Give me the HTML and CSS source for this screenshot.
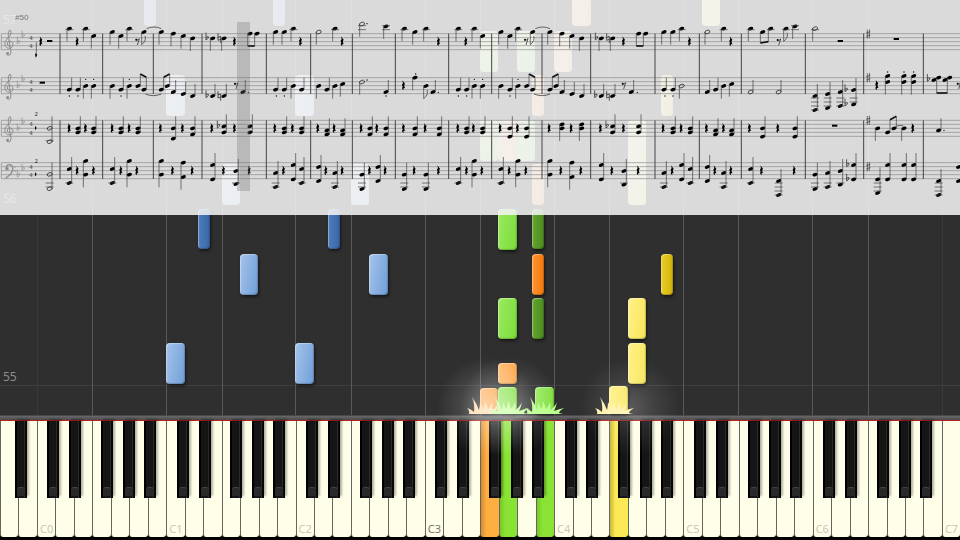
FILE: index.html
```html
<!DOCTYPE html>
<html lang="en">

<head>
    <meta charset="UTF-8">
    <meta name="viewport" content="width=device-width, initial-scale=1.0">
    <title>Piano Roll</title>
    <link rel="stylesheet" href="styles.css">
</head>

<body>

    <main class="player">
        <section class="roll" id="roll">
            <div class="bar-line">
                <span class="bar-number">55</span>
            </div>
            <div class="score">
                <span class="ghost-number ghost-top">57</span>
                <span class="ghost-number ghost-bottom">56</span>
                <span class="measure-number">#50</span>
                <svg class="sheet" id="sheet" viewBox="0 0 2880 645">
                    <defs>
                        <g id="rest">
                            <path d="M-4 -16 L4 -6 Q-1 0 5 8 Q-3 5 0 14 Q-8 8 -3 4 L-5 -3 Q0 -8 -4 -16 Z" />
                        </g>
                        <g id="eighth-rest">
                            <circle cx="-3" cy="-5" r="3" />
                            <path d="M-5 -4 Q2 -2 6 -8 L0 11" fill="none" stroke="#111" stroke-width="2" />
                        </g>
                        <g id="flat">
                            <path d="M-4 -17 V5 Q6 -1 3 -5 Q0 -7 -4 -2" fill="none" stroke="currentColor" stroke-width="2" />
                        </g>
                        <g id="natural">
                            <path d="M-4 -15 V6 L4 3 M4 14 V-6 L-4 -3" fill="none" stroke="#111" stroke-width="2" />
                        </g>
                        <g id="sharp">
                            <path d="M-3 -13 V14 M3 -14 V13 M-6 -3 L6 -7 M-6 7 L6 3" fill="none" stroke="#333" stroke-width="2" />
                        </g>
                        <g id="treble">
                            <path d="M2 13 Q-8 11 -6 3 Q-3 -5 5 -2 Q14 3 10 13 Q5 22 -6 18 Q-19 9 -10 -5 Q-4 -13 3 -20 Q8 -31 2 -36 Q-5 -32 -3 -19 L5 30 Q5 40 -3 40 Q-9 39 -8 33" fill="none" stroke="#8c8c8c" stroke-width="3" />
                            <circle cx="-5" cy="34" r="4" fill="#8c8c8c" />
                        </g>
                        <g id="bass">
                            <path d="M-10 -7 Q-9 -20 2 -19 Q14 -15 9 0 Q3 14 -12 21" fill="none" stroke="#8c8c8c" stroke-width="4" />
                            <circle cx="-7" cy="-7" r="5" fill="#8c8c8c" />
                            <circle cx="17" cy="-12" r="2" fill="#8c8c8c" />
                            <circle cx="17" cy="0" r="2" fill="#8c8c8c" />
                        </g>
                    </defs>
                </svg>
                <div class="playhead"></div>
            </div>
        </section>
        <div class="rail"></div>
        <section class="keyboard" id="keyboard"></section>
    </main>

    <script src="script.js"></script>

</body>

</html>
```

FILE: styles.css
```css
body {
    margin: 0;
    background-color: #000;
    font-family: "Noto Sans", "Open Sans", sans-serif;
}

.player {
    display: flex;
    flex-direction: column;
    height: 100vh;
    overflow: hidden;
}

.roll {
    position: relative;
    flex: 1;
    background-color: #2f2f30;
}

.octave-line {
    position: absolute;
    top: 0;
    bottom: 0;
    width: 1px;
    background-color: #5a5a5a;
}

.octave-line.dim {
    background-color: #3a3a3a;
}

.bar-line {
    position: absolute;
    left: 0;
    right: 0;
    bottom: 29px;
    border-bottom: 1px solid #3f3f3f;
}

.bar-number {
    display: block;
    padding-left: 3px;
    font-size: 12px;
    line-height: 16px;
    color: #8c8c8c;
}

/* falling notes */
.note {
    position: absolute;
    box-sizing: border-box;
    border-radius: 4px;
    box-shadow: inset 1px 1px 1px rgba(255, 255, 255, 0.35), inset -1px -1px 1px rgba(0, 0, 0, 0.2), 1px 2px 3px rgba(0, 0, 0, 0.5);
}

.note.faded {
    box-shadow: inset 0 0 0 40px rgba(255, 255, 255, 0.45);
}

.note.blue {
    background: linear-gradient(100deg, #a5c3ea, #709fd8);
}

.note.navy {
    background: linear-gradient(90deg, #4f7dbb, #3866a8);
}

.note.green {
    background: linear-gradient(100deg, #9bea62, #7bdc38);
}

.note.forest {
    background: linear-gradient(90deg, #62a52e, #4d8c1f);
}

.note.orange {
    background: linear-gradient(100deg, #ffbd76, #fba243);
}

.note.rust {
    background: linear-gradient(90deg, #ff9431, #f3790c);
}

.note.yellow {
    background: linear-gradient(100deg, #fff28a, #f8e558);
}

.note.gold {
    background: linear-gradient(90deg, #e9cd27, #d1b309);
}

.glow {
    position: absolute;
    z-index: 3;
    bottom: -42px;
    width: 100px;
    height: 100px;
    margin-left: -50px;
    background: radial-gradient(closest-side, rgba(255, 255, 255, 0.3), rgba(255, 255, 255, 0.12) 50%, rgba(255, 255, 255, 0));
    pointer-events: none;
}

.glow.soft {
    opacity: 0.7;
}

.splash {
    position: absolute;
    z-index: 2;
    bottom: 1px;
    width: 40px;
    height: 18px;
    margin-left: -20px;
}

/* sheet music */
.score {
    position: absolute;
    z-index: 1;
    top: 0;
    left: 0;
    right: 0;
    background-color: rgba(243, 243, 243, 0.88);
}

.sheet {
    display: block;
    width: 100%;
    height: auto;
    color: #111;
}

.measure-number,
.ghost-number {
    position: absolute;
    line-height: 12px;
}

.measure-number {
    top: 12px;
    left: 15px;
    font-family: "Liberation Sans", sans-serif;
    font-size: 8px;
    color: #777;
}

.ghost-number {
    left: 3px;
    font-size: 12px;
    color: #e8e8e8;
}

.ghost-top {
    top: 14px;
}

.ghost-bottom {
    bottom: 10px;
}

.playhead {
    position: absolute;
    top: 10%;
    bottom: 11%;
    left: 24.7%;
    width: 1.3%;
    background-color: rgba(110, 110, 110, 0.3);
}

.staff-line {
    stroke: #8a8a8a;
    stroke-width: 2;
}

.stem {
    stroke: #3a3a3a;
    stroke-width: 2;
}

.measure-bar {
    stroke: #444;
    stroke-width: 3;
}

.beam {
    stroke: #111;
    stroke-width: 5;
}

.tie {
    fill: none;
    stroke: #222;
    stroke-width: 2;
}

.open-head {
    fill: none;
    stroke: #111;
    stroke-width: 2;
}

.signature {
    color: #8c8c8c;
}

.time {
    font-family: "Liberation Serif", serif;
    font-weight: bold;
    font-size: 20px;
    fill: #666;
    text-anchor: middle;
}

.voice {
    font-family: "Liberation Serif", serif;
    font-size: 18px;
}

/* piano */
.rail {
    height: 5px;
    background: linear-gradient(#3c3c3d, #656566 30%, #4b4b4d);
    border-bottom: 1px solid #b8201e;
}

.keyboard {
    display: flex;
    height: 119px;
    box-sizing: border-box;
    padding-bottom: 3px;
    background-color: #000;
}

.slot {
    position: relative;
    flex: 1;
}

.white-key,
.black-key {
    padding: 0;
    border: none;
    cursor: pointer;
}

.white-key {
    display: flex;
    align-items: flex-end;
    width: 100%;
    height: 100%;
    padding: 0 0 0 2px;
    border-left: 1px solid #66665c;
    border-radius: 0 0 3px 3px;
    background-color: #fffee8;
    font-family: inherit;
    font-size: 11px;
    line-height: 16px;
    color: #cbc8b3;
}

.white-key.middle {
    color: #77756a;
}

.white-key.orange {
    background: linear-gradient(90deg, #d88a30, #ffae42 30%);
}

.white-key.green {
    background: linear-gradient(90deg, #75c927, #8ae234 30%);
}

.white-key.yellow {
    background: linear-gradient(90deg, #c6b53a, #fbe955 30%);
}

.black-key {
    position: absolute;
    z-index: 1;
    top: 0;
    width: 65%;
    height: 66%;
    background: linear-gradient(90deg, #000 15%, #151515 16%, #151515 78%, #3a3a3a 80%, #050505 88%);
    box-shadow: 2px -2px 2px rgba(0, 0, 0, 0.3);
}

.black-key::after {
    content: "";
    position: absolute;
    left: 2px;
    right: 2px;
    bottom: 2px;
    height: 8px;
    border-top: 1px solid #444;
    border-radius: 3px 3px 0 0;
    background-color: #292929;
}
```

FILE: script.js
```js
const WHITE_KEYS = 52;
// where each black key starts, measured in white keys from the left of its slot (C..B)
const BLACK_OFFSETS = [0.57, 0.75, null, 0.48, 0.66, 0.8, null];

const roll = document.getElementById('roll');
const keyboard = document.getElementById('keyboard');
const sheet = document.getElementById('sheet');

function degree(key) {
    return (key + 5) % 7;
}

// keyboard
const pressed = { 26: 'orange', 27: 'green', 29: 'green', 33: 'yellow' };

for (let key = 0; key < WHITE_KEYS; key++) {
    const slot = document.createElement('div');
    slot.className = 'slot';

    const white = document.createElement('button');
    white.type = 'button';
    white.className = 'white-key ' + (pressed[key] || '');
    if (degree(key) === 0) {
        const octave = (key - 2) / 7;
        white.textContent = 'C' + octave;
        if (octave === 3) white.classList.add('middle');
    } else {
        white.setAttribute('aria-label', 'CDEFGAB'[degree(key)]);
    }
    slot.appendChild(white);

    const offset = BLACK_OFFSETS[degree(key)];
    if (offset !== null && key < WHITE_KEYS - 1) {
        const black = document.createElement('button');
        black.type = 'button';
        black.className = 'black-key';
        black.setAttribute('aria-label', 'CDEFGAB'[degree(key)] + ' sharp');
        black.style.left = offset * 100 + '%';
        slot.appendChild(black);
    }
    keyboard.appendChild(slot);

    // guide lines on every C and F
    if (degree(key) === 0 || degree(key) === 3) {
        const line = document.createElement('div');
        line.className = 'octave-line' + (key === 2 || key === 51 ? ' dim' : '');
        line.style.left = key / WHITE_KEYS * 100 + '%';
        roll.appendChild(line);
    }
}

// falling notes: white key index, top, height, colour
const sharpColours = ['navy', 'forest', 'rust', 'gold'];
const notes = [
    [7, -14, 40, 'navy'], [14, -14, 40, 'navy'], [31, -14, 40, 'orange'], [38, -14, 40, 'yellow'],
    [26, 31, 41, 'green'], [28, 31, 41, 'green'], [30, 31, 41, 'orange'],
    [9, 75, 41, 'blue'], [16, 75, 41, 'blue'], [28, 75, 41, 'rust'], [35, 75, 41, 'gold'],
    [26, 120, 41, 'green'], [27, 120, 41, 'orange'], [28, 120, 41, 'green'], [34, 120, 85, 'yellow'],
    [12, 164, 41, 'blue'], [19, 164, 41, 'blue'], [28, 164, 41, 'rust'],
    [10, 209, 40, 'navy'], [17, 209, 40, 'navy'], [27, 209, 41, 'green'], [28, 209, 40, 'forest'],
    [13, 254, 41, 'blue'], [20, 254, 41, 'blue'], [28, 254, 41, 'rust'], [35, 254, 41, 'gold'],
    [27, 298, 41, 'green'], [28, 298, 41, 'forest'], [34, 298, 41, 'yellow'],
    [9, 343, 41, 'blue'], [16, 343, 41, 'blue'], [34, 343, 41, 'yellow'], [27, 363, 21, 'orange'],
    [26, 388, 26, 'orange'], [27, 387, 27, 'green'], [29, 387, 27, 'green'], [33, 386, 28, 'yellow']
];

notes.forEach(([key, top, height, colour]) => {
    const isSharp = sharpColours.includes(colour);
    const note = document.createElement('div');
    const start = isSharp ? key + BLACK_OFFSETS[degree(key)] : key;
    note.className = 'note ' + colour + (top < 200 ? ' faded' : '');
    note.style.left = start / WHITE_KEYS * 100 + '%';
    note.style.width = (isSharp ? 0.65 : 1) / WHITE_KEYS * 100 + '%';
    note.style.top = top + 'px';
    note.style.height = height + 'px';
    roll.appendChild(note);
});

// sparks where a note meets the keys
const splashes = [[26.4, '#ffdcae', ''], [27.6, '#c3ff9a', ''], [29.5, '#b9ff8c', 'none'], [33.3, '#fff2ac', 'soft']];

splashes.forEach(([key, colour, glow]) => {
    const left = key / WHITE_KEYS * 100 + '%';
    roll.insertAdjacentHTML('beforeend',
        `<svg class="splash" viewBox="0 0 40 18"><path fill="${colour}" d="M2 18 Q3 15 0 12 Q4 13 7 16 Q8 8 5 1 Q10 8 12 14 Q13 10 13 6 Q15 10 16 13 Q18 10 18 5 Q20 9 21 13 Q24 10 25 6 Q26 10 25 14 Q30 11 32 6 Q31 11 29 15 Q34 13 39 12 Q34 15 34 17 L38 18 Z"/></svg>`);
    roll.lastElementChild.style.left = left;
    if (glow !== 'none') {
        roll.insertAdjacentHTML('beforeend', `<div class="glow ${glow}"></div>`);
        roll.lastElementChild.style.left = (key + (glow ? 0.8 : 0)) / WHITE_KEYS * 100 + '%';
    }
});

// sheet music
// u/d quarter note stem up/down, U/D half note, f flagged eighth, h head only
// r/e rests, w block rest, b flat, n natural, s sharp, . dot
const staves = [
    {
        top: 101,
        music: `r123:125 w149:123 d208:86 r232:125 d257:86 d281:108 d337:96 d363:108 d388:86 e412:124 f432:96
            d484:96 d520:101 d550:108 d578:115 b622:115 d638:115 n658:115 d672:115 r704:125 h750:101 h771:101
            d827:96 d853:96 d880:86 r902:125 D956:96 d1005:86 r1027:125 D1086:72 .1101:71 d1158:79
            d1213:86 d1245:96 d1278:86 r1316:125 d1375:86 r1398:125 d1423:86 d1448:108 d1503:96 d1530:108
            d1554:86 e1578:124 f1598:96 d1650:96 d1686:101 d1716:108 d1745:115 b1790:115 d1804:115 n1824:115
            d1838:115 r1871:125 h1916:101 h1937:101 d1992:96 d2019:96 d2045:86 r2069:125 D2122:96 d2171:86
            r2193:125 d2252:86 h2288:96 h2312:86 e2336:125 f2358:86 d2385:79 D2445:86 w2521:123 s2605:102 w2689:117`
    },
    {
        top: 233,
        music: `w127:248 u208:269 u234:269 d257:258 d281:258 .208:288 .234:288 .257:238 .281:238 d337:258 u363:269
            .363:288 .388:238 d388:258 h414:258 h432:269 h484:269 h502:258 u520:276 u550:282 u578:288 b622:288
            u638:288 n658:288 u672:288 e708:256 u729:276 .745:277 u827:269 u853:269 .829:288 .853:288 d880:258
            u905:269 d956:258 u981:269 d1005:258 d1028:252 D1086:246 .1101:240 u1158:276 .1158:288 r1211:257
            d1245:233 .1247:222 f1278:258 u1299:276 .1315:277 u1375:269 u1400:269 .1375:288 .1400:288 d1423:258
            .1423:238 d1448:258 .1448:238 d1503:258 u1530:269 .1530:288 d1554:258 .1554:238 h1580:258 h1598:269
            h1650:269 h1668:258 u1686:276 u1716:282 u1745:288 b1788:288 u1804:288 n1824:288 u1838:288 e1871:256
            u1894:276 .1912:277 u1992:269 u2019:269 .1995:288 .2019:288 D2045:258 u2122:276 u2147:269 d2171:258
            d2195:252 U2252:276 U2336:276 u2445:288,330 u2483:282,324 u2521:276,318 u2561:270,313 b2539:270
            b2539:313 s2605:233 r2631:256 d2663:228,246 d2712:228,246 d2741:228,246 .2663:216 .2712:216 .2741:216
            b2786:239 h2802:240 h2816:233 h2835:240 h2849:233 e2876:256`
    },
    {
        top: 361,
        music: `U149:385,425 r208:385 u234:385,397 r257:385 u281:385,397 r337:385 u363:385,397 r388:385 u414:385,397
            r482:385 u520:385,416 r548:385 u578:385,403 r636:385 b656:379 u672:379,397 r704:385 u750:379,397
            r825:385 u853:385,397 r878:385 u905:385,397 r954:385 u981:391,403 r1003:385 u1028:391,403 r1084:385
            u1110:385,403 r1131:385 u1158:385,403 r1211:385 u1245:385,403 r1276:385 u1318:385,403 r1374:385
            u1400:385,397 r1421:385 u1448:385,397 r1501:385 u1530:385,410 r1553:385 u1580:385,410 r1648:385
            d1686:373,385 r1714:385 d1745:373,385 r1802:385 b1822:379 u1838:379,397 r1871:385 u1916:379,397
            r1990:385 u2019:385,397 r2044:385 u2071:385,397 r2120:385 u2147:391,403 r2171:385 u2195:391,403
            r2249:385 u2288:385,410 r2334:385 u2385:385,410 w2504:377 s2605:361 d2633:385 h2663:397 h2682:385
            d2712:385 r2739:385 u2816:391 .2832:391`
    },
    {
        top: 488,
        music: `U149:523,566 u208:507,549 r232:512 d257:483,524 r281:512 u337:507,549 r363:512 d388:483,524 r411:512
            d484:483,524 r518:512 d550:488,531 r577:512 u638:495,538 r671:512 u708:513,552 r748:512 u827:519,561
            r851:512 u880:495,538 u905:507,549 u956:501,543 r978:512 u1005:519,561 r1027:512 u1086:524,567
            r1109:512 u1134:501,543 r1156:512 u1213:524,567 r1243:512 u1278:524,567 r1316:512 u1375:507,549
            r1400:512 d1423:483,524 r1446:512 u1503:507,549 r1528:512 d1554:483,524 r1578:512 d1650:483,524
            r1683:512 d1716:488,531 r1743:512 u1804:495,538 r1836:512 u1872:513,554 r1915:512 u1992:519,561
            r2017:512 u2045:495,538 u2071:507,549 u2122:501,543 r2145:512 u2171:519,561 r2193:512 u2252:507,549
            r2285:512 u2336:543,585 r2383:512 u2445:524,567 u2483:519,561 u2521:513,554 u2561:495,538 b2544:495
            b2544:538 s2605:500 u2633:538,579 u2663:495,538 u2712:495,538 u2741:495,538 u2816:543,585 u2876:501,543`
    }
];

const measures = [180, 308, 460, 606, 799, 932, 1057, 1186, 1346, 1475, 1626, 1772, 1965, 2098, 2224, 2416, 2591, 2770];

const symbols = { r: 'rest', e: 'eighth-rest', b: 'flat', n: 'natural', s: 'sharp' };

function line(x1, y1, x2, y2, cls) {
    return `<line x1="${x1}" y1="${y1}" x2="${x2}" y2="${y2}" class="${cls}"/>`;
}

function drawNote(type, x, ys, staffTop) {
    let out = '';
    const low = Math.max(...ys);
    const high = Math.min(...ys);
    const open = type === 'U' || type === 'D';
    ys.forEach(y => {
        out += `<ellipse cx="${x}" cy="${y}" rx="8" ry="5" transform="rotate(-20 ${x} ${y})" class="${open ? 'open-head' : 'head'}"/>`;
    });
    if (type === 'u' || type === 'U') out += line(x + 7, low, x + 7, high - 36, 'stem');
    if (type === 'd' || type === 'D' || type === 'f') out += line(x - 7, high, x - 7, low + 38, 'stem');
    if (type === 'f') out += `<path class="tie" d="M${x - 7} ${low + 38} Q${x + 8} ${low + 26} ${x + 3} ${low + 12}"/>`;
    // ledger lines outside the staff
    for (let y = staffTop - 12; y >= high - 3; y -= 12) out += line(x - 12, y, x + 12, y, 'stem');
    for (let y = staffTop + 61; y <= low + 3; y += 12) out += line(x - 12, y, x + 12, y, 'stem');
    return out;
}

let drawing = '';

staves.forEach((staff, index) => {
    const top = staff.top;
    for (let i = 0; i < 5; i++) {
        const y = top + i * 12;
        drawing += line(4, y, 2880, y, 'staff-line');
    }
    const treble = index < 3;
    drawing += `<use href="#${treble ? 'treble' : 'bass'}" x="28" y="${top + 25}"/>`;
    drawing += `<g class="signature"><use href="#flat" x="56" y="${top + (treble ? 26 : 38)}"/><use href="#flat" x="70" y="${top + (treble ? 8 : 20)}"/></g>`;
    drawing += `<text class="time" x="93" y="${top + 18}">4</text><text class="time" x="93" y="${top + 44}">4</text>`;
    drawing += line(4, top, 4, top + 48, 'staff-line');

    staff.music.trim().split(/\s+/).forEach(token => {
        const type = token[0];
        const [x, ys] = token.slice(1).split(':');
        const cx = Number(x);
        const heights = ys.split(',').map(Number);
        if (symbols[type]) {
            drawing += `<use href="#${symbols[type]}" x="${cx}" y="${heights[0]}"/>`;
        } else if (type === 'w') {
            drawing += `<rect x="${cx - 8}" y="${heights[0] - 3}" width="16" height="6"/>`;
        } else if (type === '.') {
            drawing += `<circle cx="${cx}" cy="${heights[0]}" r="2"/>`;
        } else {
            drawing += drawNote(type, cx, heights, top);
        }
    });
});

measures.forEach(x => {
    drawing += line(x, 101, x, 282, 'measure-bar') + line(x, 361, x, 537, 'measure-bar');
});

// beamed pairs: first stem x, bottom, beam y, then the second
const beams = [
    [743, 101, 138, 764, 101, 138], [1909, 101, 138, 1930, 101, 138], [2281, 96, 129, 2305, 86, 125],
    [421, 258, 222, 439, 269, 232], [491, 269, 232, 509, 258, 222], [1587, 258, 222, 1605, 269, 232],
    [1657, 269, 232, 1675, 258, 222], [2810, 240, 279, 2842, 240, 279], [2670, 397, 359, 2689, 385, 349]
];

beams.forEach(([x1, a1, b1, x2, a2, b2]) => {
    drawing += line(x1, a1, x1, b1, 'stem') + line(x2, a2, x2, b2, 'stem') + line(x1, b1, x2, b2, 'beam');
});

const ties = ['M440 86 Q462 76 484 86', 'M1606 86 Q1628 76 1650 86', 'M436 282 Q460 292 484 282',
    'M1602 282 Q1626 292 1650 282', 'M2690 378 Q2700 374 2710 378'];
ties.forEach(d => {
    drawing += `<path class="tie" d="${d}"/>`;
});

// leftovers of the previous measure beside the clefs
drawing += line(109, 127, 109, 170, 'stem') + '<path d="M105 160 L112 164 L107 173 Z"/>';
drawing += '<text class="voice" x="104" y="349">2</text><text class="voice" x="104" y="488">2</text>';
drawing += '<path d="M105 378 Q114 384 105 390 Z"/><path d="M105 517 Q114 523 105 529 Z"/>';

sheet.insertAdjacentHTML('beforeend', drawing);
```
